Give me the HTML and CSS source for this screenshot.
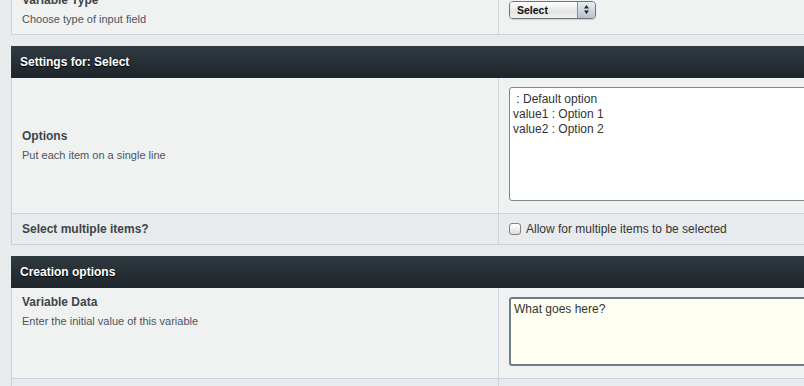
FILE: index.html
```html
<!DOCTYPE html>
<html lang="en">
  <head>
    <meta charset="UTF-8" />
    <title>Edit Variable</title>
    <link rel="stylesheet" href="styles.css">
  </head>
  <body>
    <div class="page">
      <div class="panel">
        <div class="row">
          <div class="cell-label">
            <div class="label">Variable Type</div>
            <div class="desc">Choose type of input field</div>
          </div>
          <div class="cell-field middle">
            <div class="select">
              <span class="select-text">Select</span>
              <span class="select-arrows">
                <svg width="7" height="11" viewBox="0 0 7 11"><path d="M3.5 1 L6 4.5 H1 Z M3.5 10 L6 6.5 H1 Z" fill="#222"/></svg>
              </span>
            </div>
          </div>
        </div>
      </div>

      <div class="panel">
        <div class="panel-head">Settings for: Select</div>
        <div class="row middle">
          <div class="cell-label">
            <div class="label">Options</div>
            <div class="desc">Put each item on a single line</div>
          </div>
          <div class="cell-field">
            <textarea class="options"> : Default option
value1 : Option 1
value2 : Option 2</textarea>
          </div>
        </div>
        <div class="row alt middle">
          <div class="cell-label">
            <div class="label">Select multiple items?</div>
          </div>
          <div class="cell-field compact">
            <label class="check"><span class="box"></span>Allow for multiple items to be selected</label>
          </div>
        </div>
      </div>

      <div class="panel">
        <div class="panel-head">Creation options</div>
        <div class="row">
          <div class="cell-label">
            <div class="label">Variable Data</div>
            <div class="desc">Enter the initial value of this variable</div>
          </div>
          <div class="cell-field">
            <textarea class="initial">What goes here?</textarea>
          </div>
        </div>
        <div class="row alt">
          <div class="cell-label">
            <div class="label">&nbsp;</div>
          </div>
          <div class="cell-field"></div>
        </div>
      </div>
    </div>
  </body>
</html>
```

FILE: styles.css
```css
html, body {
  margin: 0;
  background: #e7ebee;
  overflow: hidden;
}
body {
  font-family: "Liberation Sans", Arial, sans-serif;
  font-size: 12px;
  color: #333;
}
.page {
  margin-top: -14px;
  padding-left: 11px;
  width: 1000px;
}
.panel {
  margin-bottom: 11px;
}
.panel-head {
  height: 32px;
  line-height: 32px;
  padding-left: 9px;
  background: linear-gradient(#303a41, #1e252b);
  color: #fff;
  font-weight: bold;
  font-size: 12px;
  text-shadow: 0 1px 1px #000;
}
.row {
  display: flex;
  background: #f0f2f2;
  border-left: 1px solid #c9cfd7;
  border-bottom: 1px solid #cbd2da;
}
.row.alt {
  background: #e8ebee;
}
.row.middle .cell-label,
.row.middle .cell-field {
  display: flex;
  flex-direction: column;
  justify-content: center;
}
.cell-label {
  width: 476px;
  padding: 6px 0 7px 10px;
  border-right: 1px solid #cdd4dc;
}
.cell-field {
  flex: 1;
  padding: 9px 10px 12px 10px;
}
.cell-field.compact {
  padding-top: 7px;
  padding-bottom: 7px;
}
.cell-field.middle {
  display: flex;
  align-items: center;
  padding-top: 0;
  padding-bottom: 0;
}
.label {
  font-weight: bold;
  color: #3f4448;
  line-height: 16px;
}
.desc {
  margin-top: 3px;
  font-size: 11px;
  line-height: 16px;
  color: #4a5560;
}
.select {
  display: flex;
  width: 85px;
  height: 16px;
  margin-top: -1px;
  border: 1px solid #6f7479;
  border-radius: 4px;
  overflow: hidden;
  box-shadow: 0 1px 1px rgba(0, 0, 0, 0.15);
}
.select-text {
  flex: 1;
  padding-left: 7px;
  line-height: 16px;
  font-size: 10.5px;
  font-weight: bold;
  color: #111;
  background: linear-gradient(#ffffff, #e4e4e4 60%, #f2f2f2);
}
.select-arrows {
  width: 17px;
  display: flex;
  align-items: center;
  justify-content: center;
  border-left: 1px solid #8a9099;
  background: linear-gradient(#e8edf3, #b9c2cc);
}
textarea {
  display: block;
  font-family: "Liberation Sans", Arial, sans-serif;
  font-size: 12px;
  line-height: 15px;
  color: #333;
  resize: none;
  margin: 0;
}
.options {
  width: 420px;
  height: 104px;
  padding: 4px 3px;
  border: 1px solid #7c8892;
  border-radius: 3px;
  background: #fff;
}
.initial {
  width: 420px;
  height: 59px;
  padding: 3px 3px;
  border: 2px solid #6d7e89;
  border-radius: 3px;
  background: #fffff2;
}
.check {
  display: flex;
  align-items: center;
  gap: 5px;
  color: #333;
  line-height: 16px;
}
.box {
  width: 10px;
  height: 10px;
  border: 1px solid #7d8288;
  border-radius: 3px;
  background: linear-gradient(#ffffff, #dcdcdc);
}
```
